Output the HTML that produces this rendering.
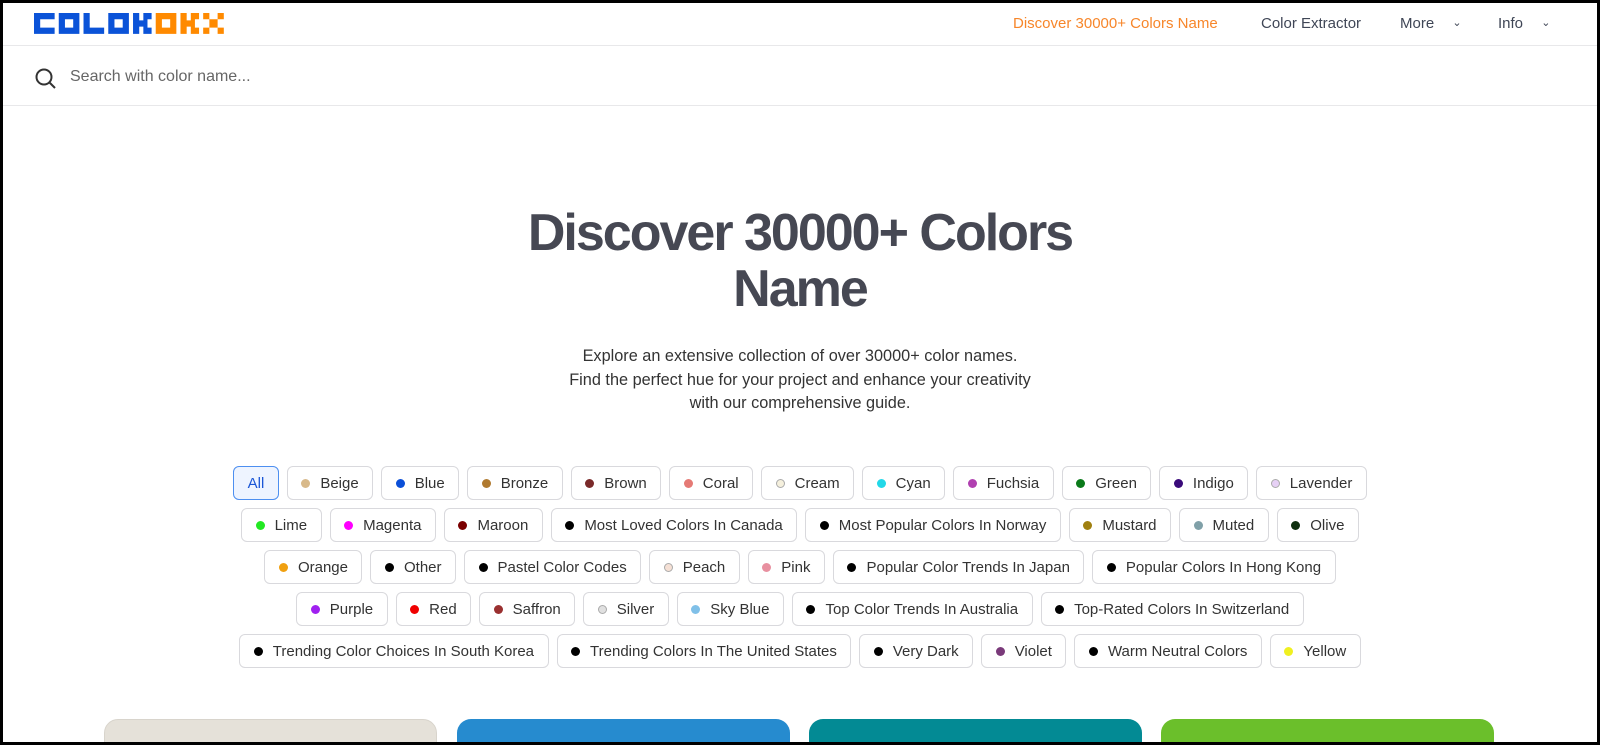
<!DOCTYPE html>
<html><head><meta charset="utf-8"><style>
*{box-sizing:border-box;margin:0;padding:0}
body{width:1600px;height:745px;overflow:hidden;background:#fff;font-family:"Liberation Sans",sans-serif}
.frame{position:relative;width:1600px;height:745px;border:3px solid #000;overflow:hidden}
.nav{position:absolute;left:0;top:0;width:1594px;height:43px;border-bottom:1px solid #e8e8ea}
.logo{position:absolute;left:31px;top:10px}
.nl{position:absolute;top:12px;font-size:15px;color:#3f4656}
.ch{font-size:11px;margin-left:14px;position:relative;top:-2px}
.search{position:absolute;left:0;top:43px;width:1594px;height:60px;border-bottom:1px solid #e8e8ea}
.search span{position:absolute;left:67px;top:22px;font-size:16px;color:#666}
h1{position:absolute;left:0;width:1594px;top:202px;text-align:center;font-size:52px;line-height:56px;color:#464853;font-weight:bold;letter-spacing:-2px}
.p{position:absolute;left:0;width:1594px;top:342px;text-align:center;font-size:16.3px;line-height:23.5px;color:#333}
.chips{position:absolute;left:222px;width:1150px;top:463px;display:flex;flex-wrap:wrap;justify-content:center;gap:8px 8px}
.c{height:34px;border:1px solid #d9d9dd;border-radius:6px;padding:0 13.5px;font-size:15px;color:#333;display:flex;align-items:center;white-space:nowrap}
.c i{display:inline-block;width:9px;height:9px;border-radius:50%;margin-right:10px}
.all{background:#eef4ff;border-color:#4d8ff0;color:#1a56d6}
.card{position:absolute;top:716px;width:333px;height:60px;border-radius:14px}
</style></head><body><div class="frame">
<div class="nav">
<svg class="logo" width="196" height="23" viewBox="0 0 190 22" preserveAspectRatio="none">
<g fill="#0b53d8">
<path d="M0 0h20v6h-14v8h14v6h-20z"/>
<path d="M24 0h20v20h-20zM30 6v8h8v-8z" fill-rule="evenodd"/>
<path d="M48 0h6v14h14v6h-20z"/>
<path d="M72 0h20v20h-20zM78 6v8h8v-8z" fill-rule="evenodd"/>
<path d="M96 0h6v7h4v-7h8v6h-4v8h4v6h-8v-7h-4v7h-6z"/>
</g>
<g fill="#ff8a00">
<path d="M118 0h20v20h-20zM124 6v8h8v-8z" fill-rule="evenodd"/>
<path d="M142 0h6v7h4v-7h8v6h-4v8h4v6h-8v-7h-4v7h-6z"/>
<path d="M164 0h6v6h8v-6h6v6h-6v8h6v6h-6v-6h-8v6h-6v-6h6v-8h-6z"/>
</g></svg>
<span class="nl" style="left:1010px;color:#f7862a">Discover 30000+ Colors Name</span>
<span class="nl" style="left:1258px">Color Extractor</span>
<span class="nl" style="left:1397px">More <span class="ch">&#8964;</span></span>
<span class="nl" style="left:1495px">Info <span class="ch">&#8964;</span></span>
</div>
<div class="search">
<svg style="position:absolute;left:32px;top:22px" width="22" height="22" viewBox="0 0 22 22" fill="none" stroke="#333" stroke-width="2"><circle cx="9" cy="9" r="7.5"/><path d="M14.5 14.5l5.5 5.5"/></svg>
<span>Search with color name...</span>
</div>
<h1>Discover 30000+ Colors<br>Name</h1>
<div class="p">Explore an extensive collection of over 30000+ color names.<br>Find the perfect hue for your project and enhance your creativity<br>with our comprehensive guide.</div>
<div class="chips">
<div class="c all">All</div>
<div class="c"><i style="background:#d8b98a"></i>Beige</div>
<div class="c"><i style="background:#0b4fd8"></i>Blue</div>
<div class="c"><i style="background:#b07a30"></i>Bronze</div>
<div class="c"><i style="background:#7a2a2a"></i>Brown</div>
<div class="c"><i style="background:#e57a75"></i>Coral</div>
<div class="c"><i style="background:#f5f0dd;border:1px solid #aaa"></i>Cream</div>
<div class="c"><i style="background:#22d8e8"></i>Cyan</div>
<div class="c"><i style="background:#b040b0"></i>Fuchsia</div>
<div class="c"><i style="background:#0a7a1a"></i>Green</div>
<div class="c"><i style="background:#3a0a7a"></i>Indigo</div>
<div class="c"><i style="background:#e6d0f5;border:1px solid #aaa"></i>Lavender</div>
<div class="c"><i style="background:#22e822"></i>Lime</div>
<div class="c"><i style="background:#ff00ff"></i>Magenta</div>
<div class="c"><i style="background:#7a0000"></i>Maroon</div>
<div class="c"><i style="background:#000"></i>Most Loved Colors In Canada</div>
<div class="c"><i style="background:#000"></i>Most Popular Colors In Norway</div>
<div class="c"><i style="background:#a08010"></i>Mustard</div>
<div class="c"><i style="background:#80a0a8"></i>Muted</div>
<div class="c"><i style="background:#103010"></i>Olive</div>
<div class="c"><i style="background:#f0a010"></i>Orange</div>
<div class="c"><i style="background:#000"></i>Other</div>
<div class="c"><i style="background:#000"></i>Pastel Color Codes</div>
<div class="c"><i style="background:#f5e0d5;border:1px solid #aaa"></i>Peach</div>
<div class="c"><i style="background:#e890a0"></i>Pink</div>
<div class="c"><i style="background:#000"></i>Popular Color Trends In Japan</div>
<div class="c"><i style="background:#000"></i>Popular Colors In Hong Kong</div>
<div class="c"><i style="background:#a020f0"></i>Purple</div>
<div class="c"><i style="background:#f00000"></i>Red</div>
<div class="c"><i style="background:#9a3030"></i>Saffron</div>
<div class="c"><i style="background:#e0e0e0;border:1px solid #aaa"></i>Silver</div>
<div class="c"><i style="background:#80c0e8"></i>Sky Blue</div>
<div class="c"><i style="background:#000"></i>Top Color Trends In Australia</div>
<div class="c"><i style="background:#000"></i>Top-Rated Colors In Switzerland</div>
<div class="c"><i style="background:#000"></i>Trending Color Choices In South Korea</div>
<div class="c"><i style="background:#000"></i>Trending Colors In The United States</div>
<div class="c"><i style="background:#000"></i>Very Dark</div>
<div class="c"><i style="background:#7a3a7a"></i>Violet</div>
<div class="c"><i style="background:#000"></i>Warm Neutral Colors</div>
<div class="c"><i style="background:#f0f020"></i>Yellow</div>
</div>
<div class="card" style="left:101px;background:#e5e1d9;border:1px solid #d8d4cc"></div>
<div class="card" style="left:454px;background:#268bcf"></div>
<div class="card" style="left:806px;background:#038a94"></div>
<div class="card" style="left:1158px;background:#6bbf2b"></div>
</div></body></html>
